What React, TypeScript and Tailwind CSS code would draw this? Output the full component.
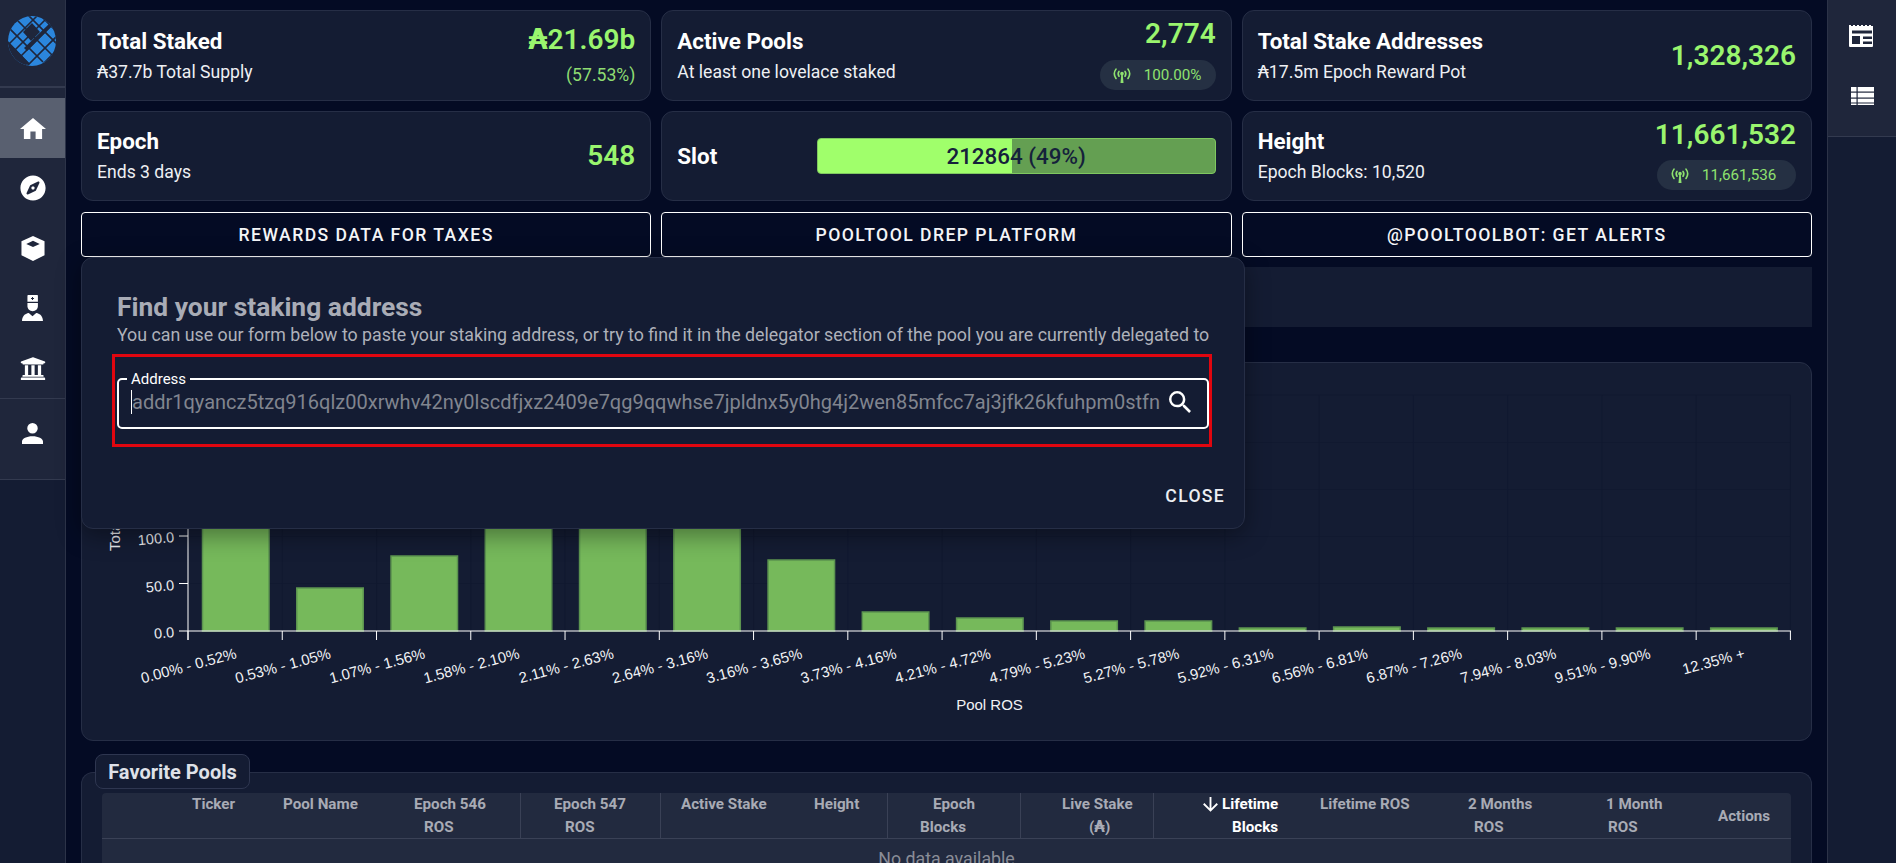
import React from "react";
import { FaCompass, FaUniversity } from "react-icons/fa";

const Search = () => (
  <svg viewBox="3 3 17.5 17.5" className="h-[22px] w-[22px] shrink-0 fill-white">
    <path d="M9.5,3A6.5,6.5 0 0,1 16,9.5C16,11.11 15.41,12.59 14.44,13.73L14.71,14H15.5L20.5,19L19,20.5L14,15.5V14.71L13.73,14.44C12.59,15.41 11.11,16 9.5,16A6.5,6.5 0 0,1 3,9.5A6.5,6.5 0 0,1 9.5,3M9.5,5C7,5 5,7 5,9.5C5,12 7,14 9.5,14C12,14 14,12 14,9.5C14,7 12,5 9.5,5Z" />
  </svg>
);

const Logo = () => (
  <svg viewBox="0 0 50 50" className="h-[50px] w-[50px]">
    <defs>
      <clipPath id="g">
        <ellipse cx="25" cy="25" rx="24" ry="25" />
      </clipPath>
    </defs>
    <g clipPath="url(#g)">
      <rect width="50" height="50" fill="#2b86dd" />
      <path d="M-4 22 L22 48 M-2 8 L36 46 M6 0 L48 42 M18 -4 L54 32 M30 -4 L54 20" stroke="#1f263b" strokeWidth="1.6" fill="none" />
      <path d="M2 28 L30 0 M6 36 L40 2 M10 44 L46 8 M20 50 L54 16 M34 50 L54 30" stroke="#1f263b" strokeWidth="1.6" fill="none" />
      <path d="M25 7 L33 16 L24 25 L16 16 Z" fill="#1f263b" />
      <path d="M0 24 L23 48 L14 50 L0 50 Z" fill="#1f263b" />
      <path d="M17 32 L42 8 L44 11 L20 35 Z" fill="#1f263b" />
    </g>
  </svg>
);

const Home = () => (
  <svg viewBox="2 3 20 17" preserveAspectRatio="none" className="h-[21px] w-[26px] fill-white">
    <path d="M10,20V14H14V20H19V12H22L12,3L2,12H5V20H10Z" />
  </svg>
);

const Cube = () => (
  <svg viewBox="0 0 24 26" className="h-[25px] w-[24px]">
    <path d="M12 0 L24 5.5 V20 L12 26 L0 20 V5.5 Z" fill="#fff" />
    <path d="M12 5 L19 8.2 L12 11.4 L5 8.2 Z" fill="#1f263b" />
  </svg>
);

const Nurse = () => (
  <svg viewBox="0 0 62 77" className="h-[26px] w-[21px] fill-white">
    <path d="M18 0 h27 a2 2 0 0 1 2 2 v18 h-31 v-18 a2 2 0 0 1 2 -2 z" />
    <path d="M29.5 6 h3 v3 h3 v3 h-3 v3 h-3 v-3 h-3 v-3 h3 z" fill="#1f263b" />
    <path d="M16 24 h31 v8 c0 10 -7 16 -15.5 16 c-8.5 0 -15.5 -6 -15.5 -16 z" />
    <path d="M0 77 c0 -14 8 -22 20 -24 l11 10 l11 -10 c12 2 20 10 20 24 z" />
  </svg>
);

const Person = () => (
  <svg viewBox="4 4 16 16" className="h-[21px] w-[21px] fill-white">
    <path d="M12,4A4,4 0 0,1 16,8A4,4 0 0,1 12,12A4,4 0 0,1 8,8A4,4 0 0,1 12,4M12,14C16.42,14 20,15.79 20,18V20H4V18C4,15.79 7.58,14 12,14Z" />
  </svg>
);

const PanelIcon = () => (
  <svg viewBox="0 0 26 22" className="h-[22px] w-[26px]">
    <path d="M0 0 h2 v1 h2 v-1 h2 v1 h2 v-1 h2 v1 h2 v-1 h2 v1 h2 v-1 h2 v1 h2 v-1 h2 v1 h2 V21 a1 1 0 0 1 -1 1 H1 a1 1 0 0 1 -1 -1 Z" fill="#fff" />
    <rect x="3" y="5.5" width="20" height="3" fill="#1f263b" />
    <rect x="3" y="11" width="8" height="8" fill="#1f263b" />
    <rect x="14" y="11.5" width="9" height="2.5" fill="#1f263b" />
    <rect x="14" y="16.5" width="9" height="2.5" fill="#1f263b" />
  </svg>
);

const ListIcon = () => (
  <svg viewBox="0 0 23 18" className="h-[18px] w-[23px]">
    <rect width="23" height="18" fill="#fff" />
    <rect x="0" y="4.5" width="23" height="1.2" fill="#1f263b" />
    <rect x="0" y="10.5" width="23" height="1.2" fill="#1f263b" />
    <rect x="0" y="15.5" width="23" height="1" fill="#1f263b" />
    <rect x="5.5" y="0" width="1.2" height="18" fill="#1f263b" />
  </svg>
);

const Signal = () => (
  <svg viewBox="0 0 24 20" className="h-[15px] w-[18px] shrink-0">
    <g fill="none" stroke="currentColor" strokeWidth="2.2" strokeLinecap="round">
      <path d="M4 1.5 Q-0.5 7.5 4 14" />
      <path d="M20 1.5 Q24.5 7.5 20 14" />
      <path d="M8 4.5 Q5.8 7.5 8 11" />
      <path d="M16 4.5 Q18.2 7.5 16 11" />
    </g>
    <circle cx="12" cy="7.5" r="2.4" fill="currentColor" />
    <path d="M11 9 h2 l1 11 h-4 z" fill="currentColor" />
  </svg>
);

const ArrowDown = () => (
  <svg viewBox="4 4 16 16" className="mr-[4px] h-[15px] w-[15px] shrink-0 fill-white">
    <path d="M11,4H13V16L18.5,10.5L19.92,11.92L12,19.84L4.08,11.92L5.5,10.5L11,16V4Z" />
  </svg>
);

const Pill = ({ text, cls }: { text: string; cls: string }) => (
  <div className={`flex h-[30px] items-center rounded-full bg-[#253043] text-[#8fe26f] ${cls}`}>
    <Signal />
    <span className="ml-[13px] text-[15.2px] leading-[30px]">{text}</span>
  </div>
);

const Left = ({ title, sub }: { title: string; sub: string }) => (
  <div className="flex flex-col pb-[2px]">
    <div className="text-[22.4px] leading-[26px] font-bold text-white">{title}</div>
    <div className="mt-[8px] text-[17.6px] leading-[20px] text-[#eef0f4]">{sub}</div>
  </div>
);

const Value = ({ children }: { children: React.ReactNode }) => (
  <div className="text-[28px] leading-[36px] font-semibold text-[#9af56e]">{children}</div>
);

const Card = ({ children, h }: { children: React.ReactNode; h: string }) => (
  <div className={`flex ${h} items-center justify-between rounded-[12px] border border-[#262e46] bg-[#141c33] px-[15px]`}>
    {children}
  </div>
);

const TopCards = () => (
  <div className="grid grid-cols-3 gap-x-[10px] gap-y-[10px]">
    <Card h="h-[91px]">
      <Left title="Total Staked" sub="₳37.7b Total Supply" />
      <div className="flex flex-col items-end self-start pt-[11px]">
        <Value>₳21.69b</Value>
        <div className="mt-[5px] text-[17.6px] leading-[24px] text-[#8fdc72]">(57.53%)</div>
      </div>
    </Card>
    <Card h="h-[91px]">
      <Left title="Active Pools" sub="At least one lovelace staked" />
      <div className="flex flex-col items-end self-start pt-[5px]">
        <Value>2,774</Value>
        <div className="mt-[8px]">
          <Pill text="100.00%" cls="w-[116px] pl-[13px]" />
        </div>
      </div>
    </Card>
    <Card h="h-[91px]">
      <Left title="Total Stake Addresses" sub="₳17.5m Epoch Reward Pot" />
      <Value>1,328,326</Value>
    </Card>
    <Card h="h-[90px]">
      <Left title="Epoch" sub="Ends 3 days" />
      <Value>548</Value>
    </Card>
    <Card h="h-[90px]">
      <div className="text-[22.4px] leading-[26px] font-bold text-white">Slot</div>
      <div className="grid h-[36px] w-[399px] overflow-hidden rounded-[4px] border border-[#7fc860] bg-[#649f52]">
        <div className="h-full w-[49%] bg-[#a0ff6b] [grid-area:1/1]" />
        <div className="text-center text-[22.4px] leading-[34px] font-medium text-[#15213b] [grid-area:1/1]">212864 (49%)</div>
      </div>
    </Card>
    <Card h="h-[90px]">
      <Left title="Height" sub="Epoch Blocks: 10,520" />
      <div className="flex flex-col items-end self-start pt-[5px]">
        <Value>11,661,532</Value>
        <div className="mt-[7px]">
          <Pill text="11,661,536" cls="w-[139px] pl-[14px]" />
        </div>
      </div>
    </Card>
  </div>
);

const Btn = ({ t }: { t: string }) => (
  <div className="flex h-[45px] items-center justify-center rounded-[4px] border border-white bg-[#040b24] pt-[1px] text-[17.6px] font-medium tracking-[1.45px] text-[#f4f5f7]">
    {t}
  </div>
);

const bins = [
  "0.00% - 0.52%", "0.53% - 1.05%", "1.07% - 1.56%", "1.58% - 2.10%", "2.11% - 2.63%", "2.64% - 3.16%",
  "3.16% - 3.65%", "3.73% - 4.16%", "4.21% - 4.72%", "4.79% - 5.23%", "5.27% - 5.78%", "5.92% - 6.31%",
  "6.56% - 6.81%", "6.87% - 7.26%", "7.94% - 8.03%", "9.51% - 9.90%", "12.35% +",
];
const heights = [130, 43, 75, 130, 130, 130, 71, 19, 13, 10, 10, 3, 4, 3, 3, 3, 3];
const X0 = 188;
const STEP = 94.26;
const AXIS = 631;

const Chart = () => (
  <svg viewBox="82 363 1728 376" className="block h-[376px] w-[1728px]" fontFamily="'Liberation Sans', Arial, sans-serif">
    {[395, 442.5, 489.5, 536.5, 583.5].map((y) => (
      <line key={y} x1={X0} x2={X0 + STEP * 17} y1={y} y2={y} stroke="#111930" strokeWidth="1" />
    ))}
    {bins.map((_, i) => (
      <line key={i} x1={X0 + STEP * (i + 1)} x2={X0 + STEP * (i + 1)} y1={395} y2={AXIS} stroke="#111930" strokeWidth="1" />
    ))}
    {heights.map((h, i) => (
      <rect key={i} x={X0 + STEP * i + 14.5} y={AXIS - h} width={66.5} height={h} fill="#76b95b" stroke="#5c9450" strokeWidth="1.5" />
    ))}
    <line x1={X0} x2={X0} y1={528} y2={640} stroke="#fff" />
    <line x1={179} x2={X0 + STEP * 17 + 0.5} y1={AXIS} y2={AXIS} stroke="#fff" strokeWidth="1.2" />
    {[536, 583.5].map((y) => (
      <line key={y} x1={179} x2={X0} y1={y} y2={y} stroke="#fff" />
    ))}
    {Array.from({ length: 18 }).map((_, i) => (
      <line key={i} x1={X0 + STEP * i} x2={X0 + STEP * i} y1={AXIS} y2={640} stroke="#fff" />
    ))}
    {[["100.0", 542], ["50.0", 590], ["0.0", 637]].map(([t, y]) => (
      <text key={t} transform={`translate(174.5 ${y}) rotate(-5)`} textAnchor="end" fontSize="14.5" fill="#e9eaee">{t}</text>
    ))}
    <text transform="translate(120 551) rotate(-90)" fontSize="15" fill="#e9eaee">Total Pools</text>
    {bins.map((t, i) => (
      <text key={t} transform={`translate(${X0 + STEP * i + 49.5} 658) rotate(-15)`} textAnchor="end" fontSize="15" fill="#f1f2f5">{t}</text>
    ))}
    <text x="989.5" y="710" textAnchor="middle" fontSize="15" fill="#f1f2f5">Pool ROS</text>
  </svg>
);

const lineH = "h-[23px] leading-[23px] whitespace-nowrap";

const TableHead = () => (
  <div className="grid h-[46px] grid-cols-[78px_90px_130px_120px_140px_140px_87px_133px_133px_147px_150px_140px_110px_91px] border-b border-[#3a4156] text-[15.2px] font-bold text-[#a8abb5]">
    <div />
    <div className={`pl-[12px] ${lineH}`}>Ticker</div>
    <div className={`pl-[13px] ${lineH}`}>Pool Name</div>
    <div>
      <div className={`pl-[14px] ${lineH}`}>Epoch 546</div>
      <div className={`pl-[24px] ${lineH}`}>ROS</div>
    </div>
    <div className="border-l border-[#3a4156]">
      <div className={`pl-[33px] ${lineH}`}>Epoch 547</div>
      <div className={`pl-[44px] ${lineH}`}>ROS</div>
    </div>
    <div className="border-l border-[#3a4156]">
      <div className={`pl-[20px] ${lineH}`}>Active Stake</div>
    </div>
    <div className={`pl-[14px] ${lineH}`}>Height</div>
    <div className="border-l border-[#3a4156]">
      <div className={`pl-[45px] ${lineH}`}>Epoch</div>
      <div className={`pl-[32px] ${lineH}`}>Blocks</div>
    </div>
    <div className="border-l border-[#3a4156]">
      <div className={`pl-[41px] ${lineH}`}>Live Stake</div>
      <div className={`pl-[68px] ${lineH}`}>(₳)</div>
    </div>
    <div className="border-l border-[#3a4156] text-white">
      <div className={`flex items-center pl-[49px] ${lineH}`}>
        <ArrowDown />
        Lifetime
      </div>
      <div className={`pl-[78px] ${lineH}`}>Blocks</div>
    </div>
    <div className={`pl-[20px] ${lineH}`}>Lifetime ROS</div>
    <div>
      <div className={`pl-[18px] ${lineH}`}>2 Months</div>
      <div className={`pl-[24px] ${lineH}`}>ROS</div>
    </div>
    <div>
      <div className={`pl-[16px] ${lineH}`}>1 Month</div>
      <div className={`pl-[18px] ${lineH}`}>ROS</div>
    </div>
    <div className="flex items-center pl-[18px]">Actions</div>
  </div>
);

const Dialog = () => (
  <div className="absolute top-[257px] left-[81px] flex h-[272px] w-[1164px] flex-col rounded-[12px] border border-[#262e46] bg-[#141c33] pt-[33px] pl-[35px] shadow-[0_6px_24px_rgba(0,0,0,0.4)]">
    <div className="text-[26.4px] leading-[32px] font-bold text-[#a9acb6]">Find your staking address</div>
    <div className="text-[17.8px] leading-[24px] whitespace-nowrap text-[#aeb1ba]">
      You can use our form below to paste your staking address, or try to find it in the delegator section of the pool you are currently delegated to
    </div>
    <div className="mt-[7px] -ml-[5px] h-[93px] w-[1100px] border-[3px] border-[#e1060f] pt-[14px] pl-[2px]">
      <fieldset className="h-[58px] w-[1092px] rounded-[5px] border-2 border-white px-[12px]">
        <legend className="-ml-[4px] px-[4px] text-[15px] leading-[16px] text-white">Address</legend>
        <div className="flex h-[30px] items-center">
          <div className="h-[24px] w-[1px] shrink-0 bg-white" />
          <div className="flex-1 truncate text-[20px] text-[#81858f]">addr1qyancz5tzq916qlz00xrwhv42ny0lscdfjxz2409e7qg9qqwhse7jpldnx5y0hg4j2wen85mfcc7aj3jfk26kfuhpm0stfn</div>
          <div className="mr-[4px] ml-[8px]">
            <Search />
          </div>
        </div>
      </fieldset>
    </div>
    <div className="mt-[39px] mr-[19px] self-end text-[17.6px] leading-[20px] font-medium tracking-[1.3px] text-[#eceef2]">CLOSE</div>
  </div>
);

const NavRow = ({ children, active }: { children: React.ReactNode; active?: boolean }) => (
  <div className={`flex h-[60px] items-center justify-center text-white ${active ? "bg-[#596070]" : ""}`}>{children}</div>
);

export default function App() {
  return (
    <div className="relative flex h-[863px] w-[1896px] overflow-hidden bg-[#040b24] font-[Roboto,'DejaVu_Sans',sans-serif]">
      <aside className="flex w-[66px] shrink-0 flex-col border-r border-[#2c3348] bg-[#141c33]">
        <div className="flex h-[86px] items-end justify-center bg-[#1f263b] pr-[1px] pb-[20px]">
          <Logo />
        </div>
        <div className="h-[2px] bg-[#333a4f]" />
        <div className="border-b border-[#333a4f] bg-[#1f263b] pt-[10px]">
          <NavRow active><Home /></NavRow>
          <NavRow><FaCompass className="h-[26px] w-[26px]" /></NavRow>
          <NavRow><Cube /></NavRow>
          <NavRow><Nurse /></NavRow>
          <NavRow><FaUniversity className="h-[27px] w-[26px]" /></NavRow>
        </div>
        <div className="flex h-[81px] items-start justify-center border-b border-[#333a4f] bg-[#1f263b] pt-[24px] text-white">
          <Person />
        </div>
      </aside>

      <main className="flex w-[1761px] shrink-0 flex-col px-[15px] pt-[10px]">
        <TopCards />
        <div className="mt-[11px] grid grid-cols-3 gap-x-[10px]">
          <Btn t="REWARDS DATA FOR TAXES" />
          <Btn t="POOLTOOL DREP PLATFORM" />
          <Btn t="@POOLTOOLBOT: GET ALERTS" />
        </div>
        <div className="mt-[10px] h-[60px] shrink-0 bg-[#141c33]" />
        <div className="mt-[35px] h-[379px] shrink-0 rounded-[12px] border border-[#262e46] bg-[#141c33]">
          <Chart />
        </div>
        <div className="relative mt-[31px] h-[120px] shrink-0 rounded-t-[12px] border border-b-0 border-[#262e46] bg-[#141c33] px-[20px] pt-[20px]">
          <div className="absolute -top-[19px] left-[13px] flex h-[35px] w-[155px] items-center justify-center rounded-[8px] border border-[#2e3650] bg-[#141c33] text-[20px] font-bold text-[#dfe1e8]">
            Favorite Pools
          </div>
          <div className="h-[100px] rounded-t-[4px] bg-[#222a3f]">
            <TableHead />
            <div className="pt-[9px] text-center text-[17.8px] leading-[22px] text-[#8a8d97]">No data available</div>
          </div>
        </div>
      </main>

      <aside className="flex w-[69px] shrink-0 flex-col border-l border-[#2c3348] bg-[#141c33]">
        <div className="h-[137px] border-b border-[#333a4f] bg-[#1f263b] pt-[6px]">
          <NavRow><PanelIcon /></NavRow>
          <NavRow><ListIcon /></NavRow>
        </div>
      </aside>

      <Dialog />
    </div>
  );
}
